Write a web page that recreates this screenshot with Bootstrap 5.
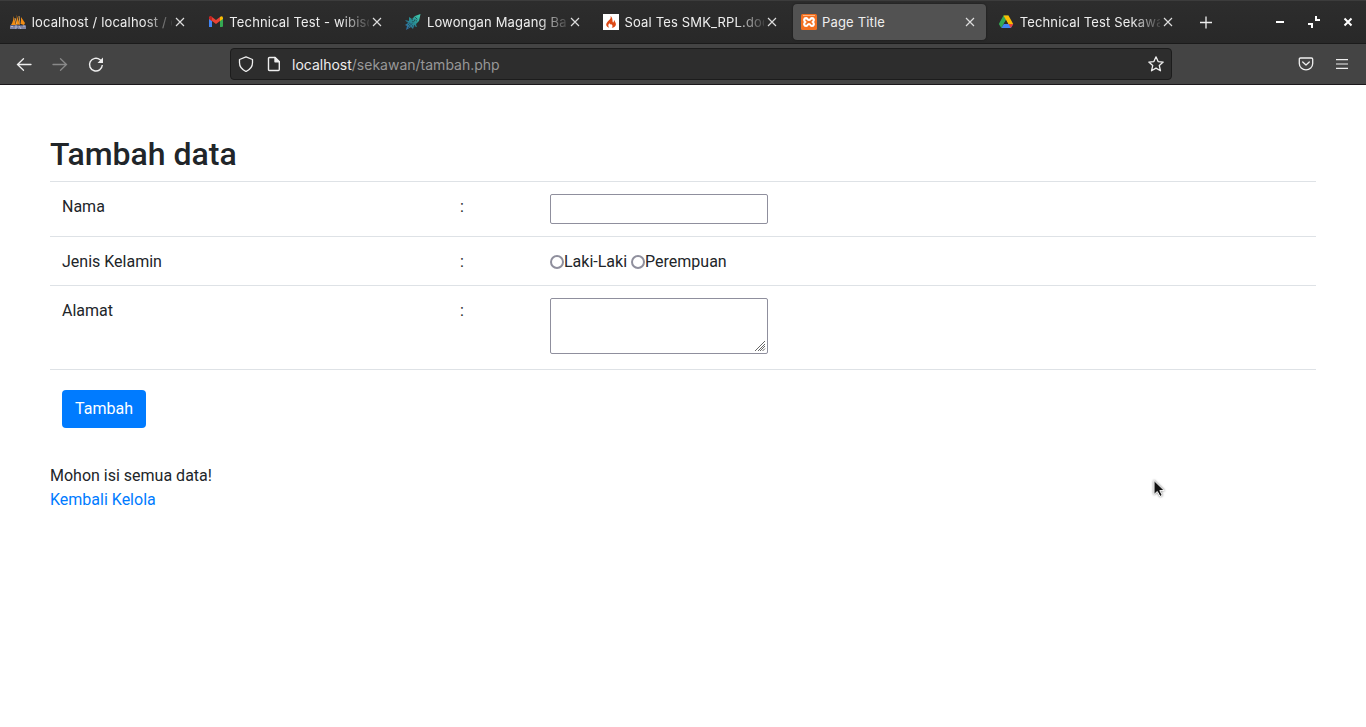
<!DOCTYPE html>
<html lang="id">
<head>
<meta charset="utf-8">
<meta name="viewport" content="width=device-width, initial-scale=1">
<title>Page Title</title>
<link href="https://cdn.jsdelivr.net/npm/bootstrap@5.3.0/dist/css/bootstrap.min.css" rel="stylesheet">
<script src="https://cdn.jsdelivr.net/npm/bootstrap@5.3.0/dist/js/bootstrap.bundle.min.js" defer></script>
<style>
body{font-family:Roboto,sans-serif;color:#212529;background:#fff;overflow:hidden}
svg{display:block;flex:none}
.chrome{font-family:Inter,sans-serif;color:#eee}
.tab-strip{height:44px;background:linear-gradient(#2d2d2d,#282828);border-top:1px solid #3c3c3c;border-bottom:1px solid #1b1b1b;padding-left:2.2px}
.browser-tab{width:193px;height:36px;margin-right:4.6px;padding-left:8px;padding-right:8px;font-size:13px;border-radius:4px}
.browser-tab.current{background:#525252;box-shadow:0 0 2px #161616}
.tab-label{margin-left:5.5px;width:142px;margin-right:auto;white-space:nowrap;letter-spacing:.16px;line-height:20px}
.fade-label{width:140px;margin-right:0;-webkit-mask-image:linear-gradient(90deg,#000 112px,transparent 144px);mask-image:linear-gradient(90deg,#000 112px,transparent 144px)}
.toolbar{height:41px;background:#444;border-bottom:1px solid #1b171b;padding-left:16px}
.address{width:942px;height:32px;background:#2d2d2d;border:1px solid #1c1c1c;border-radius:4px;font-size:14px;margin-left:126px;padding:0 7px}
.address .path{color:#989898}
.page{padding:50px 50px 0}
.page h1{font-size:32px;font-weight:500;line-height:38.4px;margin:0 0 8px}
.form-table{table-layout:fixed;margin:0}
.form-table td{padding:12px;border-top:1px solid #dee2e6;border-bottom:0;color:#212529;line-height:24px}
.form-table .text-cell{padding-top:13px;padding-bottom:11px}
.plain-field{display:block;width:218px;border:1px solid #8f8f9d;border-radius:2px;background:#fff;padding:2px;outline:0}
input.plain-field{height:30px}
.area{height:56px;position:relative}
.area svg{position:absolute;right:1px;bottom:1px}
.choice{appearance:none;width:14px;height:14px;border:2px solid #8f8f9d;border-radius:50%;background:#fff;margin:0 0 1px}
.btn-add{background:#007bff;color:#fff;width:84px;height:38px;border-radius:4px;padding:0;margin-top:8px}
.btn-add:hover{background:#0069d9;color:#fff}
.page a{color:#007bff;text-decoration:none}
.pointer{position:absolute;left:1150.5px;top:478px}
</style>
</head>
<body>
<header class="chrome">
  <div class="tab-strip d-flex align-items-center">
    <div class="browser-tab d-flex align-items-center">
      <svg width="16" height="16" viewBox="0 0 16 16"><path d="M1 11C3 8 3.500 5 3.500 2l2.500 9zM6 10c1-4 1-7 .5-9.500L10 11zM11 10V3l4 6-1 2z" fill="#f28c13"/><path d="M5 4l2 7M9 2l1 8" stroke="#ffbd62" stroke-width=".8"/><path d="M0 11h16v4H0z" fill="#555b7c"/><path d="M1 15v-3l1 1 1-1v3M5 15v-3h2v2H5M9 15v-3l2 3v-3M13 15v-3h2v3" stroke="#c3c5dd" fill="none" stroke-width=".8"/></svg>
      <span class="tab-label fade-label">localhost / localhost / c</span>
      <svg width="16" height="16" viewBox="0 0 16 16" stroke="#ddd" stroke-width="1.150"><path d="M4 4l8 8M12 4l-8 8"/></svg>
    </div>
    <div class="browser-tab d-flex align-items-center">
      <svg width="16" height="16" viewBox="0 0 16 16"><path d="M1 4v9h3V6z" fill="#4285f4"/><path d="M12 6v7h2q1 0 1-1V4z" fill="#34a853"/><path d="M1 5V3.500Q2 1.500 4 3l4 3 4-3v4l-4 3-4-3z" fill="#ea4335"/><path d="M1 5V3.500Q2 1.500 4 3v4z" fill="#c5221f"/><path d="M12 7V3q2-1.500 3 .5V5z" fill="#fbbc04"/></svg>
      <span class="tab-label fade-label">Technical Test - wibiso</span>
      <svg width="16" height="16" viewBox="0 0 16 16" stroke="#ddd" stroke-width="1.150"><path d="M4 4l8 8M12 4l-8 8"/></svg>
    </div>
    <div class="browser-tab d-flex align-items-center">
      <svg width="16" height="16" viewBox="0 0 16 16"><defs><linearGradient id="rocket" x1="1" y1="0" x2="0" y2="1"><stop stop-color="#43d3b0"/><stop offset=".5" stop-color="#278b92"/><stop offset="1" stop-color="#3467a5"/></linearGradient></defs><path d="M15.500 0l-1.500 7-3 3 1 3-3-1-1 3-2-2-5 3 1-4-2-1 3-2-3-3 4 1V3l3 2 3-3z" fill="url(#rocket)"/><path d="M3 14l9-10M2 8l4 2M7 5l1 3M7 12l5-1M9 6l3 1M3 10l3 3M10 3l3 3" stroke="#243b43" stroke-width=".9" stroke-dasharray="1 1"/></svg>
      <span class="tab-label fade-label">Lowongan Magang Bac</span>
      <svg width="16" height="16" viewBox="0 0 16 16" stroke="#ddd" stroke-width="1.150"><path d="M4 4l8 8M12 4l-8 8"/></svg>
    </div>
    <div class="browser-tab d-flex align-items-center">
      <svg width="16" height="16" viewBox="0 0 16 16"><path fill="#fff" d="M0 0h16v16H0z"/><path d="M7.500 2c.7 2-.2 3-1.800 4.600C3.500 8.800 3 10 3.300 11.300c.3 1.300 1.400 2 2.900 2.400-1.500-1.800-1-3.200.4-4.600 0 1.600.8 1.400 1.400 1 1.800 1.200 2 2.500.7 3.700 2.500-.3 4-1.500 4.200-3.400.2-1.600-1.200-3-1.700-4.500-.5 1-.2 2-1 2.600C9 8.300 10.300 3.700 7.500 2z" fill="#dd4814"/></svg>
      <span class="tab-label fade-label">Soal Tes SMK_RPL.doc</span>
      <svg width="16" height="16" viewBox="0 0 16 16" stroke="#ddd" stroke-width="1.150"><path d="M4 4l8 8M12 4l-8 8"/></svg>
    </div>
    <div class="browser-tab current d-flex align-items-center">
      <svg width="16" height="16" viewBox="0 0 16 16"><rect width="16" height="16" rx="1.500" fill="#f37021"/><path d="M2 1.500h12" stroke="#ffb47d"/><path d="M5 4.200c-2 0-2.500 2.300-.8 3.800-1.700 1.500-1.200 4 .8 4 1.700 0 1.300-2 3-2s1.300 2 3 2c2 0 2.500-2.500.8-4 1.700-1.500 1.200-3.800-.8-3.800-1.700 0-1.300 1.800-3 1.800s-1.300-1.800-3-1.800z" fill="none" stroke="#fff" stroke-width="2.200"/></svg>
      <span class="tab-label">Page Title</span>
      <svg width="16" height="16" viewBox="0 0 16 16" stroke="#ddd" stroke-width="1.150"><path d="M4 4l8 8M12 4l-8 8"/></svg>
    </div>
    <div class="browser-tab d-flex align-items-center">
      <svg width="16" height="16" viewBox="0 0 16 16"><path d="M5.500 1.500h5L8 6 3.300 14 .8 10z" fill="#34a853"/><path d="M5.500 1.500h5L15.200 10h-5z" fill="#fbbc04"/><path d="M5.800 10h9.400l-2.300 4H3.300z" fill="#4285f4"/><path d="M10.500 10h4.700l-2.300 4z" fill="#ea4335"/><path d="M8 6.200L10.200 10H5.800z" fill="#2a2a2a"/></svg>
      <span class="tab-label fade-label">Technical Test Sekawa</span>
      <svg width="16" height="16" viewBox="0 0 16 16" stroke="#ddd" stroke-width="1.150"><path d="M4 4l8 8M12 4l-8 8"/></svg>
    </div>
    <svg style="margin-left:6px" width="24" height="24" viewBox="0 0 24 24" stroke="#eee" stroke-width="1.300"><path d="M12 6.500v12M6 12.500h12"/></svg>
    <div class="d-flex align-items-center ms-auto pe-2" style="gap:14px">
      <svg width="20" height="20" viewBox="0 0 20 20"><path d="M6 9h8v2H6z" fill="#fff"/></svg>
      <svg width="20" height="20" viewBox="0 0 20 20"><path d="M11 4h2v3h3v2h-5zM4 11h5v5H7v-3H4z" fill="#fff"/></svg>
      <svg width="20" height="20" viewBox="0 0 20 20"><path d="M6.500 6.500l7 7m0-7l-7 7" stroke="#fff" stroke-width="2"/></svg>
    </div>
  </div>
  <div class="toolbar d-flex align-items-center">
    <svg width="16" height="16" viewBox="0 0 16 16" fill="none" stroke="#eee" stroke-width="1.300" stroke-linecap="round"><path d="M15 8.500H1.500M7.500 2.800L1.500 8.500l6 5.700"/></svg>
    <svg style="margin-left:20px" width="16" height="16" viewBox="0 0 16 16" fill="none" stroke="#898989" stroke-width="1.300" stroke-linecap="round"><path d="M1 8.500h13.500M8.500 2.800l6 5.700-6 5.700"/></svg>
    <svg style="margin-left:20px" width="16" height="17" viewBox="0 0 16 16" fill="none" stroke="#eee" stroke-width="1.400"><path d="M14.300 8.500a6.400 6.400 0 1 1-2.200-5.200l1.500 1.500"/><path d="M15 1v5.500H9.500z" fill="#eee" stroke="none"/></svg>
    <div class="address d-flex align-items-center">
      <svg width="16" height="16" viewBox="0 0 16 16" fill="none" stroke="#eee" stroke-width="1.300" stroke-linejoin="round"><path d="M8 .8l6.500 2.700v3.200c0 3.500-2.200 6.700-6.500 8.800-4.300-2.100-6.500-5.300-6.500-8.800V3.500z"/></svg>
      <svg style="margin-left:12px" width="16" height="16" viewBox="0 0 16 16" fill="none" stroke="#eee" stroke-width="1.400" stroke-linejoin="round"><path d="M3.500 1.500H9l4.300 4.300v7.700q0 1-1 1H3.500q-1 0-1-1v-11q0-1 1-1z"/><path d="M9 1.500v4.300h4.300z" fill="#eee"/></svg>
      <span style="margin-left:10px"><span>localhost</span><span class="path">/sekawan/tambah.php</span></span>
      <svg class="ms-auto" width="16" height="16" viewBox="0 0 16 16" fill="none" stroke="#eee" stroke-width="1.300" stroke-linejoin="round"><path d="M8 .8l2.100 4.800 5.100.5-3.900 3.500 1.200 5.200L8 12.100l-4.500 2.700 1.200-5.200L.8 6.100l5.100-.5z"/></svg>
    </div>
    <div class="d-flex ms-auto" style="gap:20px;padding-right:16px">
      <svg width="16" height="16" viewBox="0 0 16 16" fill="none" stroke="#eee" stroke-width="1.300" stroke-linecap="round" stroke-linejoin="round"><path d="M2.600 2h10.800q1.300 0 1.300 1.300v4.300a6.700 6.200 0 0 1-13.400 0V3.300q0-1.300 1.300-1.300z"/><path d="M4.700 6L8 9l3.300-3"/></svg>
      <svg width="16" height="16" viewBox="0 0 16 16" fill="#eee"><path d="M2 3h12v1.200H2zM2 7.400h12v1.200H2zM2 11.800h12V13H2z"/></svg>
    </div>
  </div>
</header>
<main class="page">
  <h1>Tambah data</h1>
  <form>
    <table class="table form-table">
      <colgroup><col style="width:398px"><col style="width:90px"><col></colgroup>
      <tbody>
        <tr><td class="text-cell">Nama</td><td class="text-cell">:</td><td><input class="plain-field" type="text" aria-label="Nama"></td></tr>
        <tr><td class="text-cell">Jenis Kelamin</td><td class="text-cell">:</td><td class="text-cell"><div class="d-flex align-items-center"><input class="choice" type="radio" name="jk" aria-label="Laki-Laki"><span style="margin-right:4px">Laki-Laki</span><input class="choice" type="radio" name="jk" aria-label="Perempuan"><span>Perempuan</span></div></td></tr>
        <tr style="height:84px"><td class="text-cell">Alamat</td><td class="text-cell">:</td><td><div class="plain-field area"><svg width="12" height="12" viewBox="0 0 12 12" stroke="#666" stroke-width="1"><path d="M1 11L11 1M4 11l7-7M6 11l5-5M8.500 11L11 8.500"/></svg></div></td></tr>
        <tr><td colspan="3"><button class="btn btn-add" type="button">Tambah</button></td></tr>
      </tbody>
    </table>
  </form>
  <div style="margin-top:24px">Mohon isi semua data!</div>
  <a href="#">Kembali Kelola</a>
</main>
<svg class="pointer" width="16" height="22" viewBox="0 0 16 22"><path d="M3 2.500v14l3.300-3 2.700 5 2.300-1.200-2.500-4.700h4.500z" fill="#111" stroke="#fff" stroke-width="1" style="filter:drop-shadow(0 0 1px #777)"/></svg>
</body>
</html>
